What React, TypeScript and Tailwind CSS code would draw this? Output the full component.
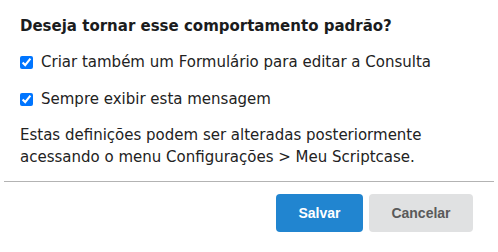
import React from "react";

export default function App() {
  return (
    <div
      className="w-[498px] h-[252px] bg-white text-[#222222] flex flex-col"
      style={{ fontFamily: '"DejaVu Sans", sans-serif' }}
    >
      <div className="px-5 pt-[16px]">
        <div className="text-[15px] leading-[20px] font-bold text-[#1b1c1d]">
          Deseja tornar esse comportamento padrão?
        </div>
        <label className="mt-[16px] flex items-center gap-2 text-[15px] leading-[20px]">
          <input type="checkbox" checked readOnly className="m-0 w-[13px] h-[13px] accent-[#0075ff]" />
          <span>Criar também um Formulário para editar a Consulta</span>
        </label>
        <label className="mt-[17px] flex items-center gap-2 text-[15px] leading-[20px]">
          <input type="checkbox" checked readOnly className="m-0 w-[13px] h-[13px] accent-[#0075ff]" />
          <span>Sempre exibir esta mensagem</span>
        </label>
        <p className="mt-[15px] text-[15px] leading-[22px]">
          Estas definições podem ser alteradas posteriormente
          <br />
          acessando o menu Configurações &gt; Meu Scriptcase.
        </p>
      </div>
      <div className="mx-1 mt-[13px] h-px bg-[#b3b3b3]" />
      <div
        className="flex justify-end gap-[6px] pr-[25px] pt-[12px]"
        style={{ fontFamily: '"Liberation Sans", Arial, sans-serif' }}
      >
        <button className="h-[38px] w-[87px] rounded-[4px] bg-[#2185d0] text-white text-[14px] font-bold">
          Salvar
        </button>
        <button className="h-[38px] w-[104px] rounded-[4px] bg-[#e0e1e2] text-[#5a5a5a] text-[14px] font-bold">
          Cancelar
        </button>
      </div>
    </div>
  );
}
